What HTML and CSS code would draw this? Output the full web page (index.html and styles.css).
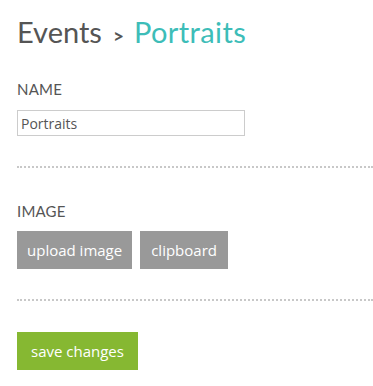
FILE: index.html
```html
<!DOCTYPE html>
<html>
<head>
<meta charset="utf-8">
<link rel="stylesheet" href="styles.css">
</head>
<body>
<div class="page">
  <h1 class="crumbs"><span class="crumb">Events</span><span class="sep">&gt;</span><span class="current">Portraits</span></h1>
  <section class="field field-name">
    <label class="label">NAME</label>
    <input class="text-input" type="text" value="Portraits">
  </section>
  <hr class="divider">
  <section class="field field-image">
    <div class="label">IMAGE</div>
    <div class="btn-row">
      <button class="btn btn-gray btn-upload">upload image</button>
      <button class="btn btn-gray">clipboard</button>
    </div>
  </section>
  <hr class="divider">
  <div class="actions">
    <button class="btn btn-green">save changes</button>
  </div>
</div>
</body>
</html>
```
FILE: styles.css
```css
* { box-sizing: border-box; }
html, body { margin: 0; padding: 0; background: #fff; }
body { font-family: Lato, "Open Sans", sans-serif; color: #555; }
.page { padding: 13px 0 0 17px; }
.crumbs {
  margin: 0;
  font-weight: 400;
  font-size: 29px;
  line-height: 38px;
  color: #555;
  display: flex;
  align-items: baseline;
}
.sep { font-size: 19px; margin: 0 10px 0 11px; color: #555; font-weight: 700; }
.current { color: #3dbdb8; letter-spacing: 0.4px; }
.field { display: flex; flex-direction: column; align-items: flex-start; }
.label {
  font-size: 15px;
  line-height: 18px;
  color: #555;
  letter-spacing: 0.2px;
}
.field-name .label { margin-top: 25px; }
.field-image .label { margin-top: 34px; }
.text-input {
  margin-top: 12px;
  width: 228px;
  height: 26px;
  border: 1px solid #ccc;
  padding: 0 3px;
  font-family: "Open Sans", sans-serif;
  font-size: 14px;
  color: #555;
  outline: none;
}
.divider {
  margin: 30px 0 0 0;
  border: 0;
  border-top: 2px dotted #c8c8c8;
  height: 0;
}
.btn-row { display: flex; gap: 8px; margin-top: 11px; }
.btn {
  border: 0;
  height: 38px;
  padding: 0 11px;
  font-family: "Open Sans", sans-serif;
  font-size: 15px;
  color: #fff;
  cursor: pointer;
}
.btn-upload { padding: 0 10px; }
.btn-gray { background: #999; }
.btn-green { background: #86b832; padding: 0 14px; }
.actions { margin-top: 31px; }
```
